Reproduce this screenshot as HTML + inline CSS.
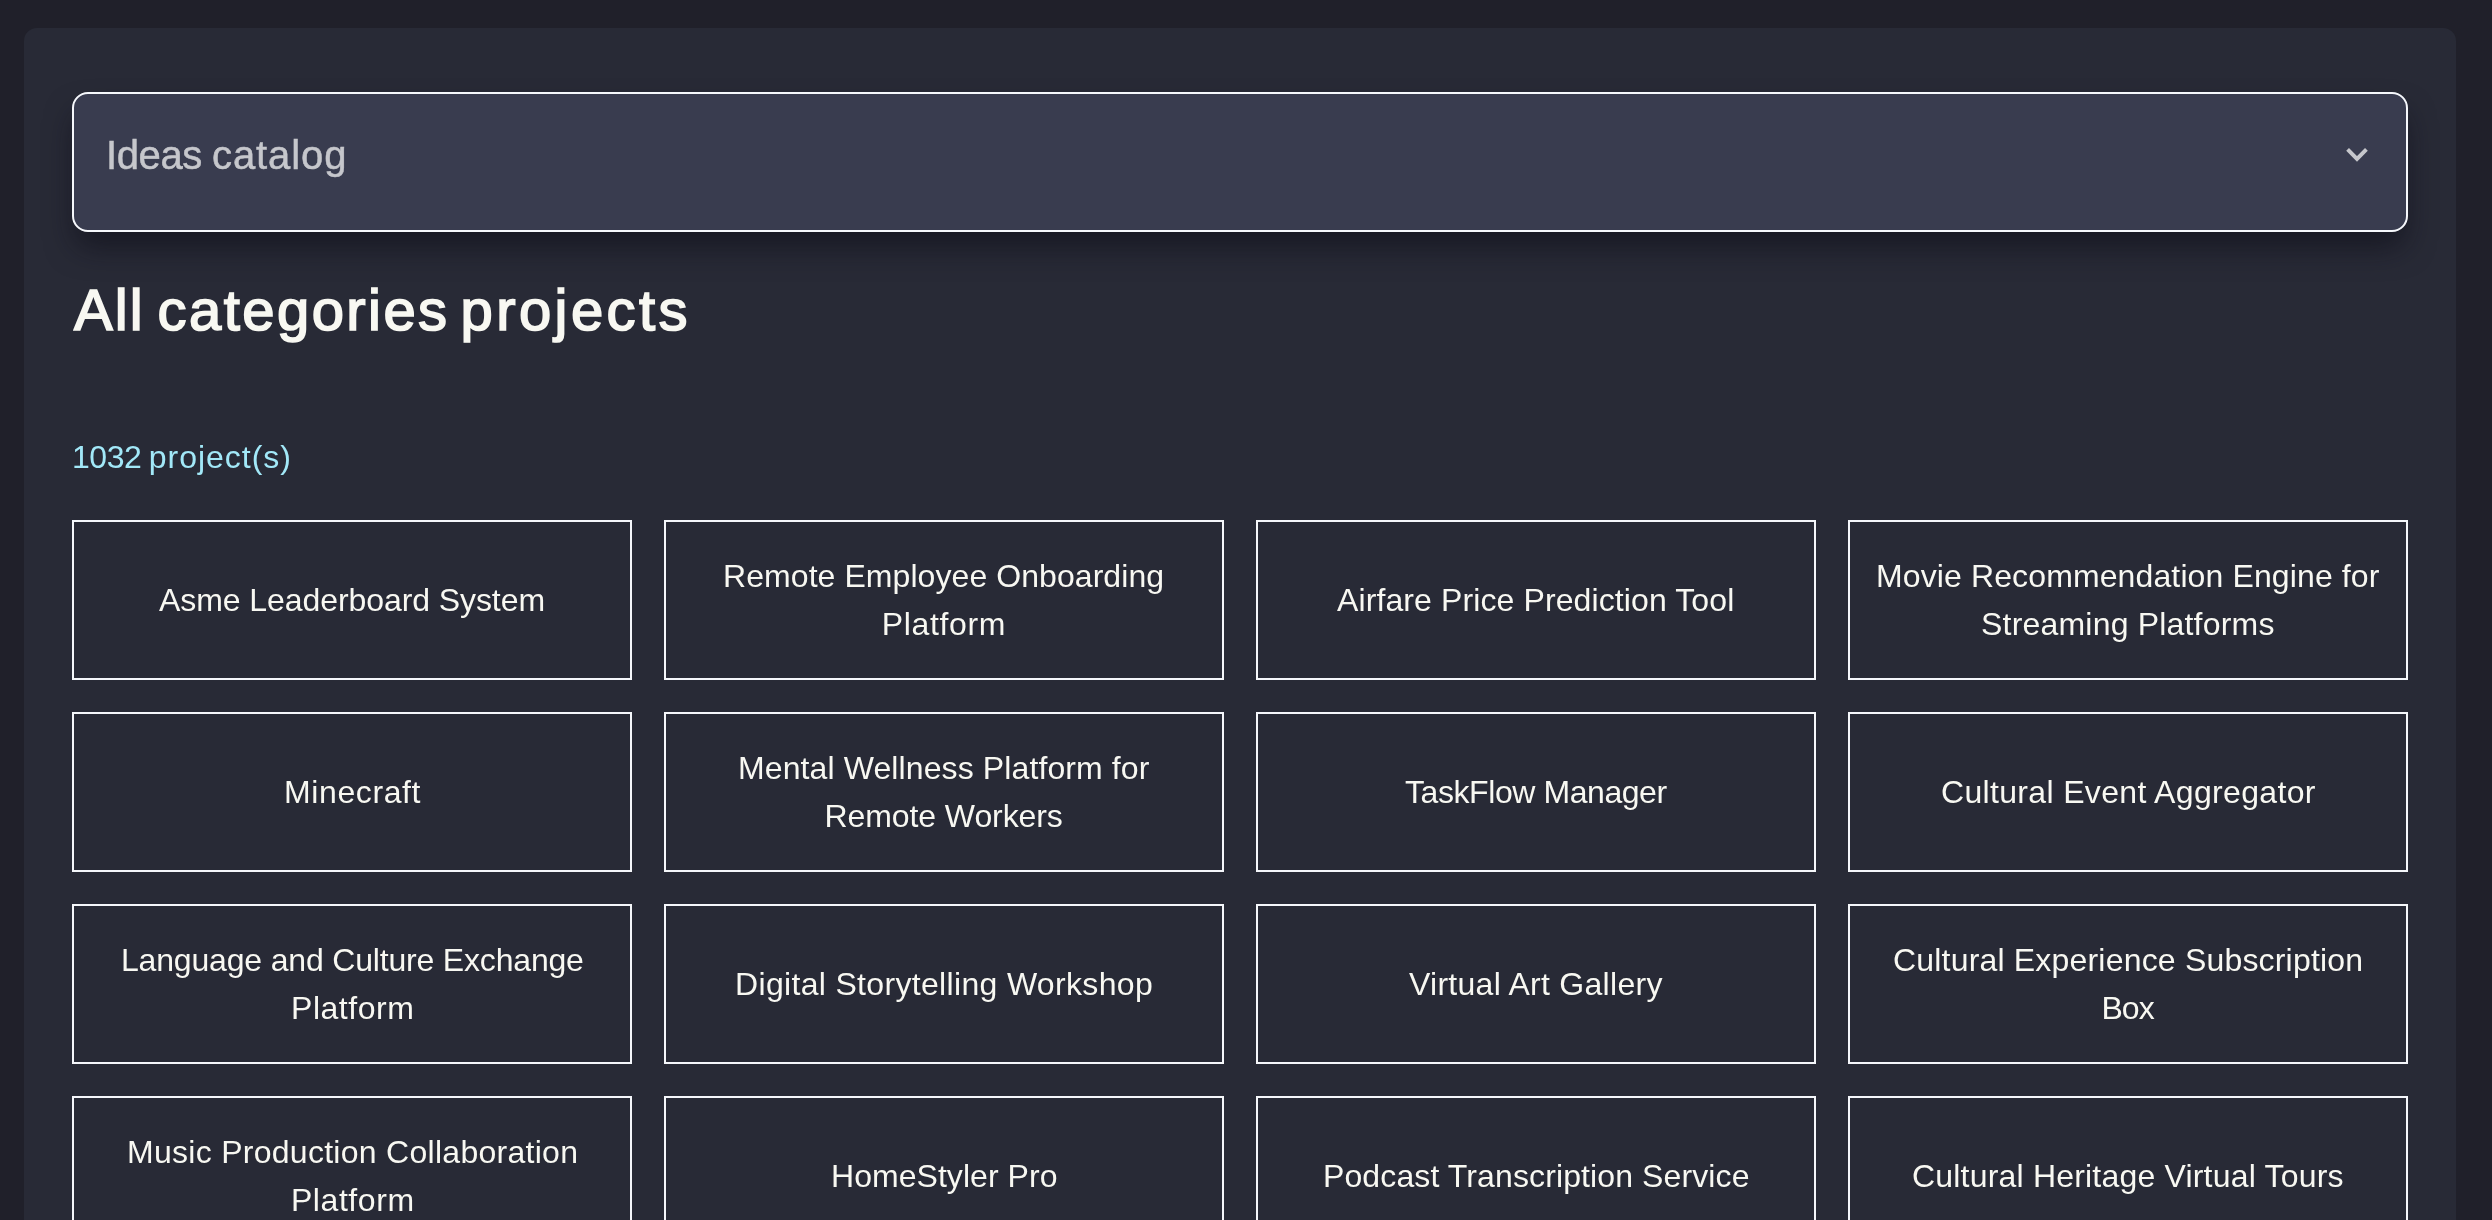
<!DOCTYPE html>
<html>
<head>
<meta charset="utf-8">
<style>
html,body{margin:0;padding:0;}
*{-webkit-font-smoothing:antialiased;}
.ph,.title,.count,.card span{will-change:transform;}
body{width:2492px;height:1220px;overflow:hidden;background:#20202a;font-family:"Liberation Sans",sans-serif;position:relative;}
.panel{position:absolute;left:24px;top:28px;width:2432px;height:1300px;background:#282a36;border-radius:13px;}
.dd{position:absolute;left:72px;top:92px;width:2332px;height:136px;border:2px solid #f6f8fc;border-radius:16px;background:#393c4f;box-shadow:0 18px 30px -4px rgba(12,12,22,0.6);}
.ph{position:absolute;left:106px;top:131px;font-size:40px;line-height:48px;color:#c6c7cc;-webkit-text-stroke:0.5px #c6c7cc;white-space:nowrap;-webkit-font-smoothing:antialiased;}
.p1,.p2{position:absolute;top:0;}
.p1{left:0;letter-spacing:-0.4px;}
.p2{left:106px;letter-spacing:0.9px;}
.t1,.t2,.t3{position:absolute;top:0;}
.t1{left:0;}
.t2{left:83.6px;letter-spacing:2.43px;}
.t3{left:386.5px;letter-spacing:3.42px;}
.chev{position:absolute;left:2330px;top:130px;}
.title{position:absolute;left:73.5px;top:275px;font-size:58px;letter-spacing:2.15px;line-height:70px;font-weight:normal;-webkit-text-stroke:1.7px #f8f8f2;color:#f8f8f2;white-space:nowrap;-webkit-font-smoothing:antialiased;}
.c1,.c2{position:absolute;top:0;}
.c1{left:0;letter-spacing:-0.45px;}
.c2{left:76.8px;letter-spacing:0.97px;}
.count{position:absolute;left:72px;top:433px;font-size:32px;line-height:48px;color:#a2e8f8;white-space:nowrap;-webkit-font-smoothing:antialiased;}
.card{position:absolute;width:556px;height:156px;border:2px solid #f5f7fb;display:flex;align-items:center;justify-content:center;text-align:center;color:#f8f8f2;font-size:32px;line-height:48px;}
.card span{display:block;}
.card span div{white-space:nowrap;}
</style>
</head>
<body>
<div class="panel"></div>
<div class="dd"></div>
<div class="ph"><span class="p1">Ideas</span><span class="p2">catalog</span></div>
<svg class="chev" width="60" height="50" viewBox="2330 130 60 50"><polyline points="2347.6,149.3 2357,158.9 2366.4,149.3" fill="none" stroke="#c6c7cc" stroke-width="3.9" stroke-linecap="butt" stroke-linejoin="miter"/></svg>
<div class="title"><span class="t1">All</span><span class="t2">categories</span><span class="t3">projects</span></div>
<div class="count"><span class="c1">1032</span><span class="c2">project(s)</span></div>

<div class="card" style="left:72px;top:520px"><span><div style="letter-spacing:-0.077px;margin-right:0.077px">Asme Leaderboard System</div></span></div>
<div class="card" style="left:664px;top:520px"><span><div style="letter-spacing:0.068px;margin-right:-0.068px">Remote Employee Onboarding</div><div style="letter-spacing:0.643px;margin-right:-0.643px">Platform</div></span></div>
<div class="card" style="left:1256px;top:520px"><span><div style="letter-spacing:0.107px;margin-right:-0.107px">Airfare Price Prediction Tool</div></span></div>
<div class="card" style="left:1848px;top:520px"><span><div style="letter-spacing:0.120px;margin-right:-0.120px">Movie Recommendation Engine for</div><div style="letter-spacing:0.194px;margin-right:-0.194px">Streaming Platforms</div></span></div>
<div class="card" style="left:72px;top:712px"><span><div style="letter-spacing:0.612px;margin-right:-0.612px">Minecraft</div></span></div>
<div class="card" style="left:664px;top:712px"><span><div style="letter-spacing:0.111px;margin-right:-0.111px">Mental Wellness Platform for</div><div style="letter-spacing:-0.092px;margin-right:0.092px">Remote Workers</div></span></div>
<div class="card" style="left:1256px;top:712px"><span><div style="letter-spacing:-0.427px;margin-right:0.427px">TaskFlow Manager</div></span></div>
<div class="card" style="left:1848px;top:712px"><span><div style="letter-spacing:0.333px;margin-right:-0.333px">Cultural Event Aggregator</div></span></div>
<div class="card" style="left:72px;top:904px"><span><div style="letter-spacing:-0.179px;margin-right:0.179px">Language and Culture Exchange</div><div style="letter-spacing:0.514px;margin-right:-0.514px">Platform</div></span></div>
<div class="card" style="left:664px;top:904px"><span><div style="letter-spacing:0.329px;margin-right:-0.329px">Digital Storytelling Workshop</div></span></div>
<div class="card" style="left:1256px;top:904px"><span><div style="letter-spacing:0.278px;margin-right:-0.278px">Virtual Art Gallery</div></span></div>
<div class="card" style="left:1848px;top:904px"><span><div style="letter-spacing:0.187px;margin-right:-0.187px">Cultural Experience Subscription</div><div style="letter-spacing:-0.950px;margin-right:0.950px">Box</div></span></div>
<div class="card" style="left:72px;top:1096px"><span><div style="letter-spacing:0.279px;margin-right:-0.279px">Music Production Collaboration</div><div style="letter-spacing:0.571px;margin-right:-0.571px">Platform</div></span></div>
<div class="card" style="left:664px;top:1096px"><span><div style="letter-spacing:0.046px;margin-right:-0.046px">HomeStyler Pro</div></span></div>
<div class="card" style="left:1256px;top:1096px"><span><div style="letter-spacing:0.114px;margin-right:-0.114px">Podcast Transcription Service</div></span></div>
<div class="card" style="left:1848px;top:1096px"><span><div style="letter-spacing:0.193px;margin-right:-0.193px">Cultural Heritage Virtual Tours</div></span></div>

</body>
</html>
